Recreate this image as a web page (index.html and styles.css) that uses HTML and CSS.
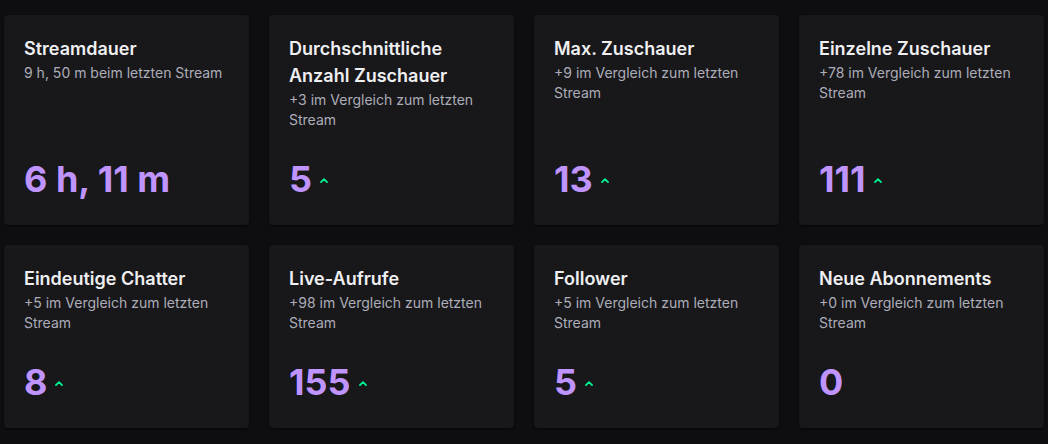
FILE: index.html
```html
<!DOCTYPE html>
<html lang="de">
<head>
<meta charset="utf-8">
<title>Stream-Statistiken</title>
<link rel="stylesheet" href="styles.css">
</head>
<body>
<main class="grid">
  <section class="card">
    <h3 class="title">Streamdauer</h3>
    <p class="sub">9 h, 50 m beim letzten Stream</p>
    <div class="value"><span>6 h, 11 m</span></div>
  </section>
  <section class="card">
    <h3 class="title">Durchschnittliche Anzahl Zuschauer</h3>
    <p class="sub">+3 im Vergleich zum letzten Stream</p>
    <div class="value"><span>5</span><svg class="up" viewBox="0 0 8 5" width="8" height="5"><polyline points="1,4.2 4,1.2 7,4.2"/></svg></div>
  </section>
  <section class="card">
    <h3 class="title">Max. Zuschauer</h3>
    <p class="sub">+9 im Vergleich zum letzten Stream</p>
    <div class="value"><span>13</span><svg class="up" viewBox="0 0 8 5" width="8" height="5"><polyline points="1,4.2 4,1.2 7,4.2"/></svg></div>
  </section>
  <section class="card">
    <h3 class="title">Einzelne Zuschauer</h3>
    <p class="sub">+78 im Vergleich zum letzten Stream</p>
    <div class="value"><span>111</span><svg class="up" viewBox="0 0 8 5" width="8" height="5"><polyline points="1,4.2 4,1.2 7,4.2"/></svg></div>
  </section>
  <section class="card">
    <h3 class="title">Eindeutige Chatter</h3>
    <p class="sub">+5 im Vergleich zum letzten Stream</p>
    <div class="value"><span>8</span><svg class="up" viewBox="0 0 8 5" width="8" height="5"><polyline points="1,4.2 4,1.2 7,4.2"/></svg></div>
  </section>
  <section class="card">
    <h3 class="title">Live-Aufrufe</h3>
    <p class="sub">+98 im Vergleich zum letzten Stream</p>
    <div class="value"><span>155</span><svg class="up" viewBox="0 0 8 5" width="8" height="5"><polyline points="1,4.2 4,1.2 7,4.2"/></svg></div>
  </section>
  <section class="card">
    <h3 class="title">Follower</h3>
    <p class="sub">+5 im Vergleich zum letzten Stream</p>
    <div class="value"><span>5</span><svg class="up" viewBox="0 0 8 5" width="8" height="5"><polyline points="1,4.2 4,1.2 7,4.2"/></svg></div>
  </section>
  <section class="card">
    <h3 class="title">Neue Abonnements</h3>
    <p class="sub">+0 im Vergleich zum letzten Stream</p>
    <div class="value"><span>0</span></div>
  </section>
</main>
</body>
</html>
```
FILE: styles.css
```css
* { box-sizing: border-box; }
html, body { margin: 0; padding: 0; background: #0e0e10; }
body {
  font-family: Inter, "Noto Sans", "Liberation Sans", sans-serif;
  color: #efeff1;
  width: 1048px;
  height: 444px;
  overflow: hidden;
}
.grid {
  display: grid;
  grid-template-columns: repeat(4, 245px);
  column-gap: 20px;
  row-gap: 20px;
  padding: 15px 4px 0;
}
.card {
  background: #18181b;
  border-radius: 4px;
  padding: 20px 20px 24px;
  display: flex;
  flex-direction: column;
  box-shadow: 0 1px 2px rgba(0, 0, 0, 0.6);
}
.title {
  margin: 0;
  font-size: 18px;
  font-weight: 600;
  line-height: 27px;
  color: #efeff1;
}
.sub {
  margin: 1px 0 0;
  font-size: 14px;
  line-height: 20px;
  color: #adadb8;
}
.value {
  margin-top: auto;
  padding-top: 27px;
  display: flex;
  align-items: center;
  height: 71px;
  font-size: 36px;
  font-weight: 700;
  line-height: 44px;
  color: #bf94ff;
}
.value span { display: block; height: 44px; }
.up {
  margin-left: 8px;
  margin-top: 2px;
  fill: none;
  stroke: #00f593;
  stroke-width: 1.8;
  stroke-linecap: round;
  stroke-linejoin: round;
}
```
